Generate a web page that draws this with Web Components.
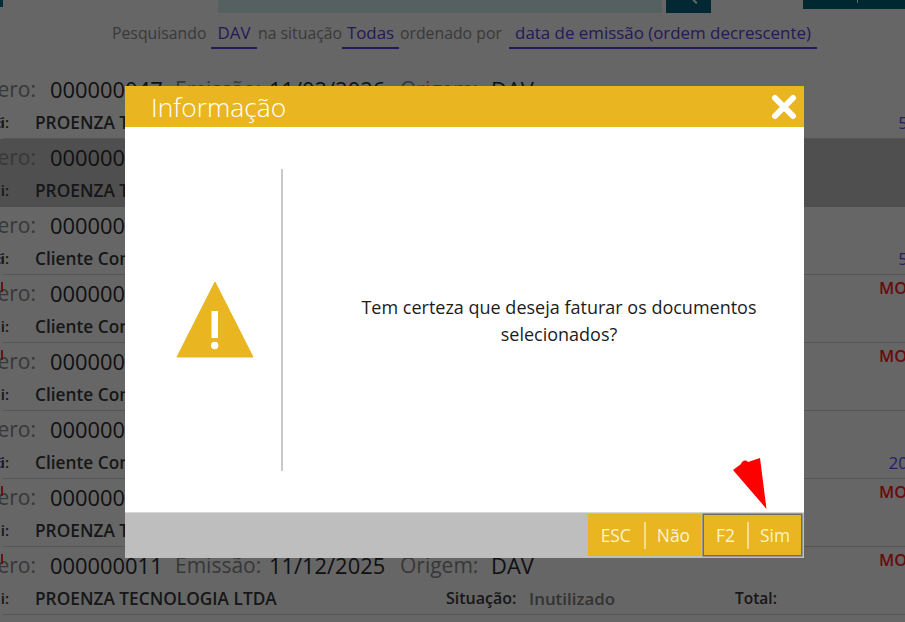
<!DOCTYPE html>
<html lang="pt-BR">
<head>
<meta charset="utf-8">
<title>Informação</title>
<style>
  html, body { margin: 0; height: 100%; overflow: hidden; background: #fff; font-family: "Open Sans", "Noto Sans", sans-serif; }
</style>
</head>
<body>
<app-topbar></app-topbar>
<search-summary></search-summary>
<doc-list>
  <doc-row number="000000047" date="11/02/2026" origin="DAV" client="PROENZA TECNOLOGIA LTDA" amount="5" mark="5"></doc-row>
  <doc-row number="000000" client="PROENZA TECNOLOGIA LTDA" selected></doc-row>
  <doc-row number="000000" client="Cliente Consumidor" amount="5" mark="5"></doc-row>
  <doc-row number="000000" client="Cliente Consumidor" flag="MO" alert></doc-row>
  <doc-row number="000000" client="Cliente Consumidor" flag="MO" alert></doc-row>
  <doc-row number="000000" client="Cliente Consumidor" amount="20" mark="6"></doc-row>
  <doc-row number="000000" client="PROENZA TECNOLOGIA LTDA" flag="MO" alert></doc-row>
  <doc-row number="000000011" date="11/12/2025" origin="DAV" client="PROENZA TECNOLOGIA LTDA" status="Inutilizado" total flag="MO" alert></doc-row>
</doc-list>
<info-dialog heading="Informação">
  Tem certeza que deseja faturar os documentos<br>selecionados?
  <key-button slot="actions" shortcut="ESC" label="Não"></key-button>
  <key-button slot="actions" shortcut="F2" label="Sim" focused></key-button>
</info-dialog>
<red-arrow></red-arrow>

<script>
  // Top strip, only the bottom edge of the toolbar is still on screen
  class AppTopbar extends HTMLElement {
    constructor() {
      super();
      this.attachShadow({ mode: 'open' }).innerHTML = `
        <style>
          :host { display: flex; height: 13px; align-items: flex-start; }
          .left { width: 3px; height: 7px; background: #0a6f8c; margin-right: 215px; }
          .search { width: 444px; height: 13px; background: #d5f0f0; margin-right: 4px; }
          .find { width: 45px; height: 13px; background: #05667f; position: relative; margin-right: 92px; }
          .find::after { content: ""; position: absolute; left: 28px; top: -1px; width: 2px; height: 5px; background: #fff; transform: rotate(-45deg); }
          .action { flex: 1; height: 9px; background: #006478; position: relative; }
          .action::after { content: ""; position: absolute; left: 54px; top: 0; width: 1px; height: 3px; background: #fff; }
        </style>
        <div class="left"></div><div class="search"></div><div class="find"></div><div class="action"></div>`;
    }
  }

  class SearchSummary extends HTMLElement {
    constructor() {
      super();
      this.attachShadow({ mode: 'open' }).innerHTML = `
        <style>
          :host { display: flex; align-items: flex-start; height: 58px; padding: 6px 0 0 112px; box-sizing: border-box; font-size: 15.8px; color: #8f8f8f; line-height: 28px; white-space: nowrap; }
          b { font-weight: 400; font-size: 16.9px; color: #5a40e0; border-bottom: 2px solid #5a40e0; text-align: center; height: 28px; }
          .dav { width: 46px; margin: 0 1px 0 6px; }
          .tod { width: 57px; margin: 0 1px; }
          .ord { width: 308px; margin-left: 5px; }
          span { display: block; }
        </style>
        <span style="width:93px">Pesquisando</span><b class="dav">DAV</b>
        <span style="width:83px">na situação</span><b class="tod">Todas</b>
        <span style="width:104px">ordenado por</span><b class="ord">data de emissão (ordem decrescente)</b>`;
    }
  }

  class DocList extends HTMLElement {
    constructor() {
      super();
      this.attachShadow({ mode: 'open' }).innerHTML = `
        <style>:host { display: block; overflow: hidden; height: 551px; }</style>
        <slot></slot>`;
    }
  }

  class DocRow extends HTMLElement {
    connectedCallback() {
      const get = n => this.getAttribute(n);
      const date = get('date');
      const root = this.shadowRoot || this.attachShadow({ mode: 'open' });
      root.innerHTML = `
        <style>
          :host { display: block; height: 68px; position: relative; }
          :host([selected]) { background: #c5c5c5; }
          .inner { height: 67px; margin-left: 3px; border-bottom: 1px solid #d4d4d4; }
          :host([selected]) .inner { border-bottom-color: #c5c5c5; }
          .line { display: grid; white-space: nowrap; align-items: center; }
          .one { grid-template-columns: 86px 125px 94px 131px 91px 1fr; height: 36px; font-size: 21.9px; margin-left: -39px; color: #2b2b2b; }
          .lbl { color: #8c8c8c; font-size: 21px; }
          .num { display: flex; justify-content: flex-end; padding-right: 14px; }
          .two { grid-template-columns: 32px 411px 83px 206px 1fr; height: 30px; font-size: 16px; font-weight: 600; color: #3a3a3a; }
          .who { display: flex; justify-content: flex-end; width: 6px; font-size: 15px; }
          .two i { font-style: normal; font-weight: 400; color: #5060e0; margin-right: -3px; }
          .client { font-size: 17.3px; }
          .st { color: #808080; font-size: 16.9px; }
          .total { font-size: 15.5px; }
          .side { position: absolute; white-space: nowrap; }
          .flag { left: 879px; top: 1px; color: #ff2020; font-size: 16.5px; font-weight: 600; }
          .amt { right: -3px; top: 40px; color: #5a50ff; font-size: 17px; }
          .alert { position: absolute; left: 1px; top: 7px; width: 2px; height: 10px; background: #ff3030; }
        </style>
        <div class="inner">
          <div class="line one">
            <span class="lbl num">Número:</span><span>${get('number')}</span>
            ${date ? `<span class="lbl">Emissão:</span><span>${date}</span>
            <span class="lbl">Origem:</span><span>${get('origin')}</span>` : ''}
          </div>
          <div class="line two">
            <span class="who">${get('mark') ? `<i>${get('mark')}</i>` : ''}i:</span><span class="client">${get('client')}</span>
            ${get('status') ? `<span>Situação:</span><span class="st">${get('status')}</span>` : ''}
            ${this.hasAttribute('total') ? '<span class="total">Total:</span>' : ''}
          </div>
        </div>
        ${this.hasAttribute('alert') ? '<div class="alert"></div>' : ''}
        ${get('flag') ? `<div class="side flag">${get('flag')}</div>` : ''}
        ${get('amount') ? `<div class="side amt">${get('amount')}</div>` : ''}`;
    }
  }

  class KeyButton extends HTMLElement {
    connectedCallback() {
      const root = this.shadowRoot || this.attachShadow({ mode: 'open' });
      root.innerHTML = `
        <style>
          :host { display: flex; align-items: center; height: 42px; background: #e9b520; color: #fdf3d0; font-size: 17.4px; }
          :host([focused]) { box-shadow: 0 0 0 1.5px #6c6c6c; height: 40px; margin-top: 1px; }
          span { padding: 0 11px; }
          .key { padding: 0 13px; border-right: 2px solid #f5dc8f; line-height: 27px; }
          :host([focused]) .key { padding: 0 12px; }
        </style>
        <span class="key">${this.getAttribute('shortcut')}</span><span>${this.getAttribute('label')}</span>`;
    }
  }

  class InfoDialog extends HTMLElement {
    connectedCallback() {
      const root = this.shadowRoot || this.attachShadow({ mode: 'open' });
      root.innerHTML = `
        <style>
          :host { position: fixed; inset: 0; background: rgba(0,0,0,.6); display: block; padding: 86px 101px 64px 125px; box-sizing: border-box; }
          .modal { height: 100%; background: #fff; display: flex; flex-direction: column; }
          header { height: 41px; background: #e9b520; color: #fff; display: flex; align-items: center; justify-content: space-between; padding: 0 7px 0 26px; flex: none; }
          h1 { margin: 0; font-size: 26.4px; font-weight: 300; }
          .close { width: 26px; height: 26px; display: block; }
          .body { flex: 1; display: flex; align-items: center; }
          .icon { width: 132px; height: 302px; padding-left: 24px; border-right: 2px solid #c9c9c9; display: flex; align-items: center; justify-content: center; flex: none; }
          .msg { flex: 1; text-align: center; font-size: 18px; line-height: 27px; color: #1c1c1c; margin-top: 2px; padding-left: 31px; }
          footer { height: 46px; background: #bebebe; border-top: 1px solid #d8d8d8; box-sizing: border-box; flex: none; display: flex; justify-content: flex-end; align-items: flex-start; gap: 3px; padding: 1px 3px 0 0; }
        </style>
        <div class="modal">
          <header>
            <h1>${this.getAttribute('heading')}</h1>
            <svg class="close" viewBox="0 0 26 26"><path d="M4 4 L22 22 M22 4 L4 22" stroke="#fff" stroke-width="6" stroke-linecap="round"/></svg>
          </header>
          <div class="body">
            <div class="icon">
              <svg width="78" height="76" viewBox="0 0 78 76">
                <path d="M39 0 L77 75 L1 75 Z" fill="#e9b520" stroke="#e9b520" stroke-linejoin="round"/>
                <path d="M35.500 29 h6.500 v27 h-6.500 z" fill="#fff"/>
                <circle cx="38.700" cy="63.500" r="3.700" fill="#fff"/>
              </svg>
            </div>
            <div class="msg"><slot></slot></div>
          </div>
          <footer><slot name="actions"></slot></footer>
        </div>`;
    }
  }

  // Red arrow someone drew over the screenshot
  class RedArrow extends HTMLElement {
    constructor() {
      super();
      this.attachShadow({ mode: 'open' }).innerHTML = `
        <style>:host { position: fixed; left: 730px; top: 455px; display: block; width: 40px; height: 58px; }</style>
        <svg width="40" height="58" viewBox="0 0 40 58">
          <path d="M3 15 L11 9 A4 4 0 0 1 18 7 L30 3 L36.500 54 Z" fill="#ff0000"/>
        </svg>`;
    }
  }

  customElements.define('app-topbar', AppTopbar);
  customElements.define('search-summary', SearchSummary);
  customElements.define('doc-list', DocList);
  customElements.define('doc-row', DocRow);
  customElements.define('key-button', KeyButton);
  customElements.define('info-dialog', InfoDialog);
  customElements.define('red-arrow', RedArrow);
</script>
</body>
</html>
